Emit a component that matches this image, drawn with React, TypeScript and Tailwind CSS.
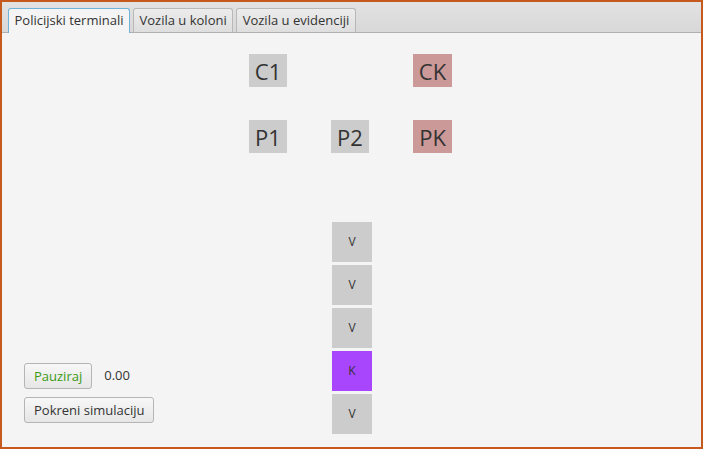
import React from 'react'

const topRow = [
  { label: 'C1', bg: 'bg-[#cccccc]' },
  { label: '', bg: '' },
  { label: 'CK', bg: 'bg-[#cc9999]' }
]

const secondRow = [
  { label: 'P1', bg: 'bg-[#cccccc]' },
  { label: 'P2', bg: 'bg-[#cccccc]' },
  { label: 'PK', bg: 'bg-[#cc9999]' }
]

const queue = ['V', 'V', 'V', 'K', 'V']

function Cell({ label, bg }: { label: string; bg: string }) {
  return (
    <div
      className={`h-[33px] flex items-center justify-center text-[22px] text-[#333333] leading-none ${bg}`}
    >
      {label}
    </div>
  )
}

export default function App() {
  return (
    <div
      className="w-[703px] h-[449px] border-2 border-[#c65a1e] bg-[#f4f4f4] flex flex-col overflow-hidden"
      style={{ fontFamily: '"Open Sans", "Noto Sans", sans-serif' }}
    >
      {/* Tab header */}
      <div className="h-[31px] shrink-0 bg-gradient-to-b from-[#e2e2e2] to-[#d8d8d8] border-b border-[#b0b0b0] flex items-end pl-[6px] gap-[3px]">
        <div className="h-[25px] -mb-px px-[5.5px] flex items-center bg-[#f4f4f4] border border-b-0 border-[#6fb3d9] rounded-t-[3px] text-[13px] text-[#333333]">
          Policijski terminali
        </div>
        <div className="h-[24px] px-[5.5px] flex items-center bg-gradient-to-b from-[#ececec] to-[#dedede] border border-b-0 border-[#b8b8b8] rounded-t-[3px] text-[13px] text-[#333333]">
          Vozila u koloni
        </div>
        <div className="h-[24px] px-[5.5px] flex items-center bg-gradient-to-b from-[#ececec] to-[#dedede] border border-b-0 border-[#b8b8b8] rounded-t-[3px] text-[13px] text-[#333333]">
          Vozila u evidenciji
        </div>
      </div>

      {/* Content */}
      <div className="flex-1 flex flex-col">
        <div className="ml-[247px] mt-[21px] grid grid-cols-[38px_38px_39px] gap-x-[44px] gap-y-[33px]">
          {topRow.map((c, i) => (
            <Cell key={i} label={c.label} bg={c.bg} />
          ))}
          {secondRow.map((c, i) => (
            <Cell key={i} label={c.label} bg={c.bg} />
          ))}
        </div>

        <div className="mt-[69px] flex items-end">
          <div className="w-[330px] pl-[22px] pb-[11px] flex flex-col items-start gap-[8px]">
            <div className="flex items-center gap-[12px]">
              <button className="h-[26px] px-[9px] rounded-[3px] border border-[#b5b5b5] bg-gradient-to-b from-[#f7f7f7] to-[#e6e6e6] text-[13px] text-[#3c9a14] leading-none">
                Pauziraj
              </button>
              <span className="text-[13px] text-[#333333]">0.00</span>
            </div>
            <button className="h-[26px] px-[9px] rounded-[3px] border border-[#b5b5b5] bg-gradient-to-b from-[#f7f7f7] to-[#e6e6e6] text-[13px] text-[#333333] leading-none">
              Pokreni simulaciju
            </button>
          </div>

          <div className="flex flex-col gap-[3px]">
            {queue.map((q, i) => (
              <div
                key={i}
                className={`w-[40px] h-[40px] flex items-center justify-center text-[12px] text-[#333333] ${
                  q === 'K' ? 'bg-[#a846fd]' : 'bg-[#cccccc]'
                }`}
              >
                {q}
              </div>
            ))}
          </div>
        </div>
      </div>
    </div>
  )
}
